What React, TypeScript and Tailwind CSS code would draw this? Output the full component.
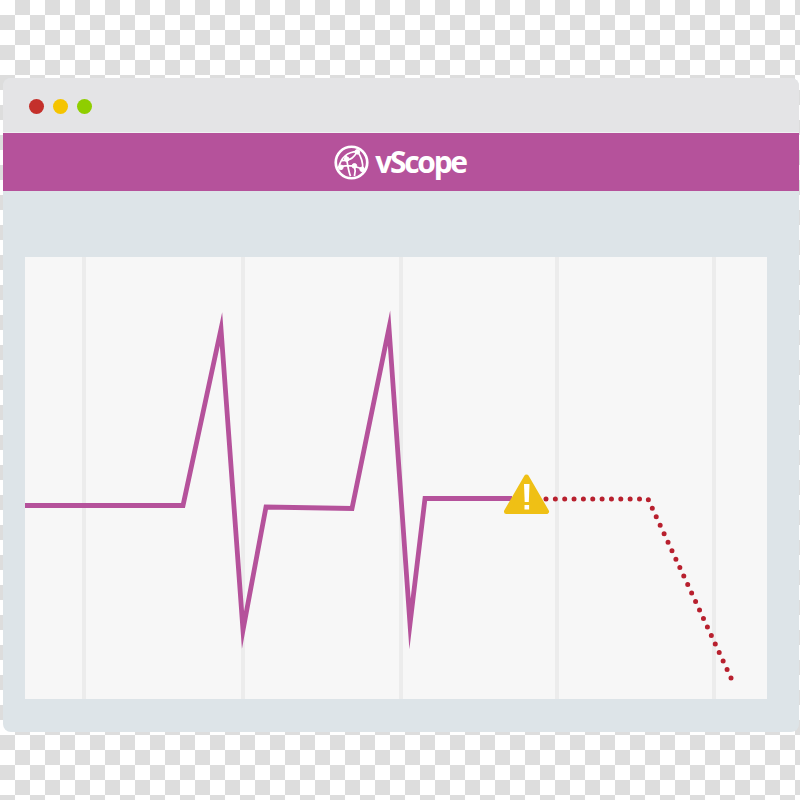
export default function App() {
  const gridCols = [61, 159, 158, 156, 157];

  return (
    <div className="w-[800px] h-[800px] overflow-hidden pt-[78px] pl-[3px] pr-px bg-[conic-gradient(#dddddd_25%,#ffffff_0_50%,#dddddd_0_75%,#ffffff_0)] bg-[length:30px_30px]">
      <div className="h-[654px] flex flex-col rounded-lg overflow-hidden bg-[#dde4e8]">
        {/* Title bar */}
        <div className="h-[55px] flex items-center gap-[9px] pl-[26px] pt-[2px] border-b border-[#f0f0f2] bg-[#e4e4e6]">
          <span className="w-[15px] h-[15px] rounded-full bg-[#c4302b]" />
          <span className="w-[15px] h-[15px] rounded-full bg-[#f5c400]" />
          <span className="w-[15px] h-[15px] rounded-full bg-[#8fce00]" />
        </div>

        {/* Brand bar */}
        <div className="h-[58px] flex items-center justify-center gap-[6px] pr-[2px] bg-[#b5529b]">
          <svg width="35" height="35" viewBox="0 0 36 36" fill="none" stroke="white">
            <circle cx="18" cy="18" r="16.2" strokeWidth="2.8" />
            <path d="M5 23C7 13 14 7 24 6.500M24 6.500C28 12 30 18 29.500 25M5 23C12 20 21 21 29.500 25M12 10C14 17 14 25 17 32M24 6.500C21 12 18 16 8 16M21 21.500C22 25 22 29 21 32" strokeWidth="1.800" />
            <circle cx="24" cy="7" r="2.400" fill="white" />
            <circle cx="13" cy="14.500" r="2.400" fill="white" />
            <circle cx="21" cy="21.500" r="2.400" fill="white" />
            <circle cx="7" cy="23" r="2.400" fill="white" />
            <circle cx="29" cy="25" r="2.400" fill="white" />
          </svg>
          <span className="text-[30px] leading-none font-bold tracking-[-2.3px] text-white font-['Open_Sans',sans-serif]">
            vScope
          </span>
        </div>

        {/* Chart */}
        <div className="flex-1 pt-[66px] pl-[22px]">
          <div className="relative w-[742px] h-[442px] flex bg-[#f7f7f7]">
            {gridCols.map((width, i) => (
              <div key={i} style={{ width }} className="border-r-4 border-[#ececec]" />
            ))}
            <svg className="absolute inset-0" width="742" height="442" viewBox="25 257 742 442" fill="none">
              <path
                d="M25 505.500H183L221 329L243 630L266 507L352 508.500L389 328L410 624L425 498.500H512"
                stroke="#b5529b"
                strokeWidth="4.800"
                strokeMiterlimit="20"
              />
              <path
                d="M546 499H648L732 680"
                stroke="#b8202e"
                strokeWidth="5"
                strokeLinecap="round"
                strokeDasharray="0 9.350"
              />
              <path d="M526.500 477L546.500 511.500H506.500Z" fill="#efc015" stroke="#efc015" strokeWidth="5" strokeLinejoin="round" />
              <path d="M524 484H529.500L528.800 502H524.700Z" fill="white" />
              <rect x="524.500" y="505" width="4.600" height="4.500" fill="white" />
            </svg>
          </div>
        </div>
      </div>
    </div>
  );
}
